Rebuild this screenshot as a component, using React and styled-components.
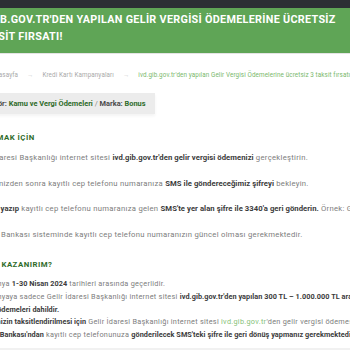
import React from 'react';
import styled, { createGlobalStyle } from 'styled-components';
import { House } from 'lucide-react';

const GlobalStyle = createGlobalStyle`
  html, body {
    margin: 0;
    padding: 0;
    background: #ffffff;
    overflow: hidden;
  }
  body {
    font-family: Roboto, "Liberation Sans", sans-serif;
  }
`;

const TopBar = styled.div`
  height: 8px;
  background: #2c2f34;
`;

const Hero = styled.header`
  background: #5fa556;
  padding: 3px 0 8px;
  border-bottom: 1px solid #e4e4e4;
`;

const Page = styled.div`
  margin-left: -27px;
  width: 405px;
`;

const Title = styled.h1`
  margin: 0 0 0 -5px;
  color: #ffffff;
  font-family: Roboto, "Liberation Sans", sans-serif;
  font-size: 10.8px;
  font-weight: 700;
  line-height: 17px;
  letter-spacing: 0.3px;
  white-space: nowrap;
`;

const Crumbs = styled.nav`
  display: flex;
  align-items: center;
  gap: 7px;
  margin: 16px 0 0 2px;
  font-size: 6.3px;
  color: #a9a9a9;
  white-space: nowrap;

  > svg {
    width: 9px;
    height: 9px;
  }
`;

const Crumb = styled.span`
  color: ${p => (p.$current ? '#79b86c' : '#a9a9a9')};
  letter-spacing: 0.1px;
`;

const Arrow = styled.span`
  color: #c4c4c4;
  padding: 0 2px;
`;

const InfoBox = styled.div`
  display: inline-block;
  margin: 14px 0 0;
  padding: 6px 9px 6px 10px;
  background: #ececec;
  font-size: 7.4px;
  font-weight: 700;
  color: #4a4a4a;
  box-shadow: 0 2px 3px rgba(0, 0, 0, 0.05);
`;

const Accent = styled.span`
  color: #2f6b2a;
`;

const Thin = styled.span`
  font-weight: 400;
  color: #888;
`;

const Section = styled.section`
  padding: 0;
`;

const Heading = styled.h2`
  margin: 18px 0 0;
  font-size: 7.8px;
  font-weight: 700;
  color: #2f6b2a;
  letter-spacing: 0.5px;
  line-height: 12px;
`;

const Steps = styled.div`
  margin-top: 8px;
  display: flex;
  flex-direction: column;
  gap: 12.8px;
`;

const Para = styled.p`
  margin: 0;
  font-size: ${p => (p.$small ? '7.3px' : '7.7px')};
  line-height: 12.7px;
  color: #7d7d7d;
  letter-spacing: 0.28px;
  white-space: nowrap;

  b {
    color: #3b3b3b;
    font-weight: 700;
    letter-spacing: 0.05px;
  }
`;

const Link = styled.span`
  color: #86bf78;
`;

const List = styled.div`
  margin-top: 7px;
`;

const Footer = styled.div`
  height: 20px;
  margin-top: 6px;
  background: #f1f1f1;
`;

export default function App() {
  return (
    <>
      <GlobalStyle />
      <TopBar />
      <Hero>
        <Page>
          <Title>
            İVD.GİB.GOV.TR'DEN YAPILAN GELİR VERGİSİ ÖDEMELERİNE ÜCRETSİZ
            <br />
            3 TAKSİT FIRSATI!
          </Title>
        </Page>
      </Hero>
      <Page>
        <Crumbs>
          <House strokeWidth={2} />
          <Crumb>Anasayfa</Crumb>
          <Arrow>→</Arrow>
          <Crumb>Kredi Kartı Kampanyaları</Crumb>
          <Arrow>→</Arrow>
          <Crumb $current>ivd.gib.gov.tr'den yapılan Gelir Vergisi Ödemelerine ücretsiz 3 taksit fırsatı!</Crumb>
        </Crumbs>
        <InfoBox>
          Sektör: <Accent>Kamu ve Vergi Ödemeleri</Accent> <Thin>/</Thin> Marka: <Accent>Bonus</Accent>
        </InfoBox>
        <Section>
          <Heading>KATILMAK İÇİN</Heading>
          <Steps>
            <Para>
              Gelir İdaresi Başkanlığı internet sitesi <b>ivd.gib.gov.tr'den gelir vergisi ödemenizi</b> gerçekleştirin.
            </Para>
            <Para>
              Ödemenizden sonra kayıtlı cep telefonu numaranıza <b>SMS ile göndereceğimiz şifreyi</b> bekleyin.
            </Para>
            <Para>
              <b>GELIR3 yazıp</b> kayıtlı cep telefonu numaranıza gelen <b>SMS'te yer alan şifre ile 3340'a geri gönderin.</b> Örnek: GELIR3 123456
            </Para>
            <Para>
              Katılım Bankası sisteminde kayıtlı cep telefonu numaranızın güncel olması gerekmektedir.
            </Para>
          </Steps>
        </Section>
        <Section>
          <Heading>NELER KAZANIRIM?</Heading>
          <List>
            <Para $small>
              Kampanya <b>1-30 Nisan 2024</b> tarihleri arasında geçerlidir.
            </Para>
            <Para $small>
              Kampanyaya sadece Gelir İdaresi Başkanlığı internet sitesi <b>ivd.gib.gov.tr'den yapılan 300 TL – 1.000.000 TL arası gelir</b>
            </Para>
            <Para $small>
              <b>vergisi ödemeleri dahildir.</b>
            </Para>
            <Para $small>
              <b>Ödemenizin taksitlendirilmesi için</b> Gelir İdaresi Başkanlığı internet sitesi <Link>ivd.gib.gov.tr</Link>'den gelir vergisi ödemesi yapmanız ve
            </Para>
            <Para $small>
              Katılım <b>Bankası'ndan</b> kayıtlı cep telefonunuza <b>gönderilecek SMS'teki şifre ile geri dönüş yapmanız gerekmektedir.</b>
            </Para>
          </List>
        </Section>
      </Page>
      <Footer />
    </>
  );
}
